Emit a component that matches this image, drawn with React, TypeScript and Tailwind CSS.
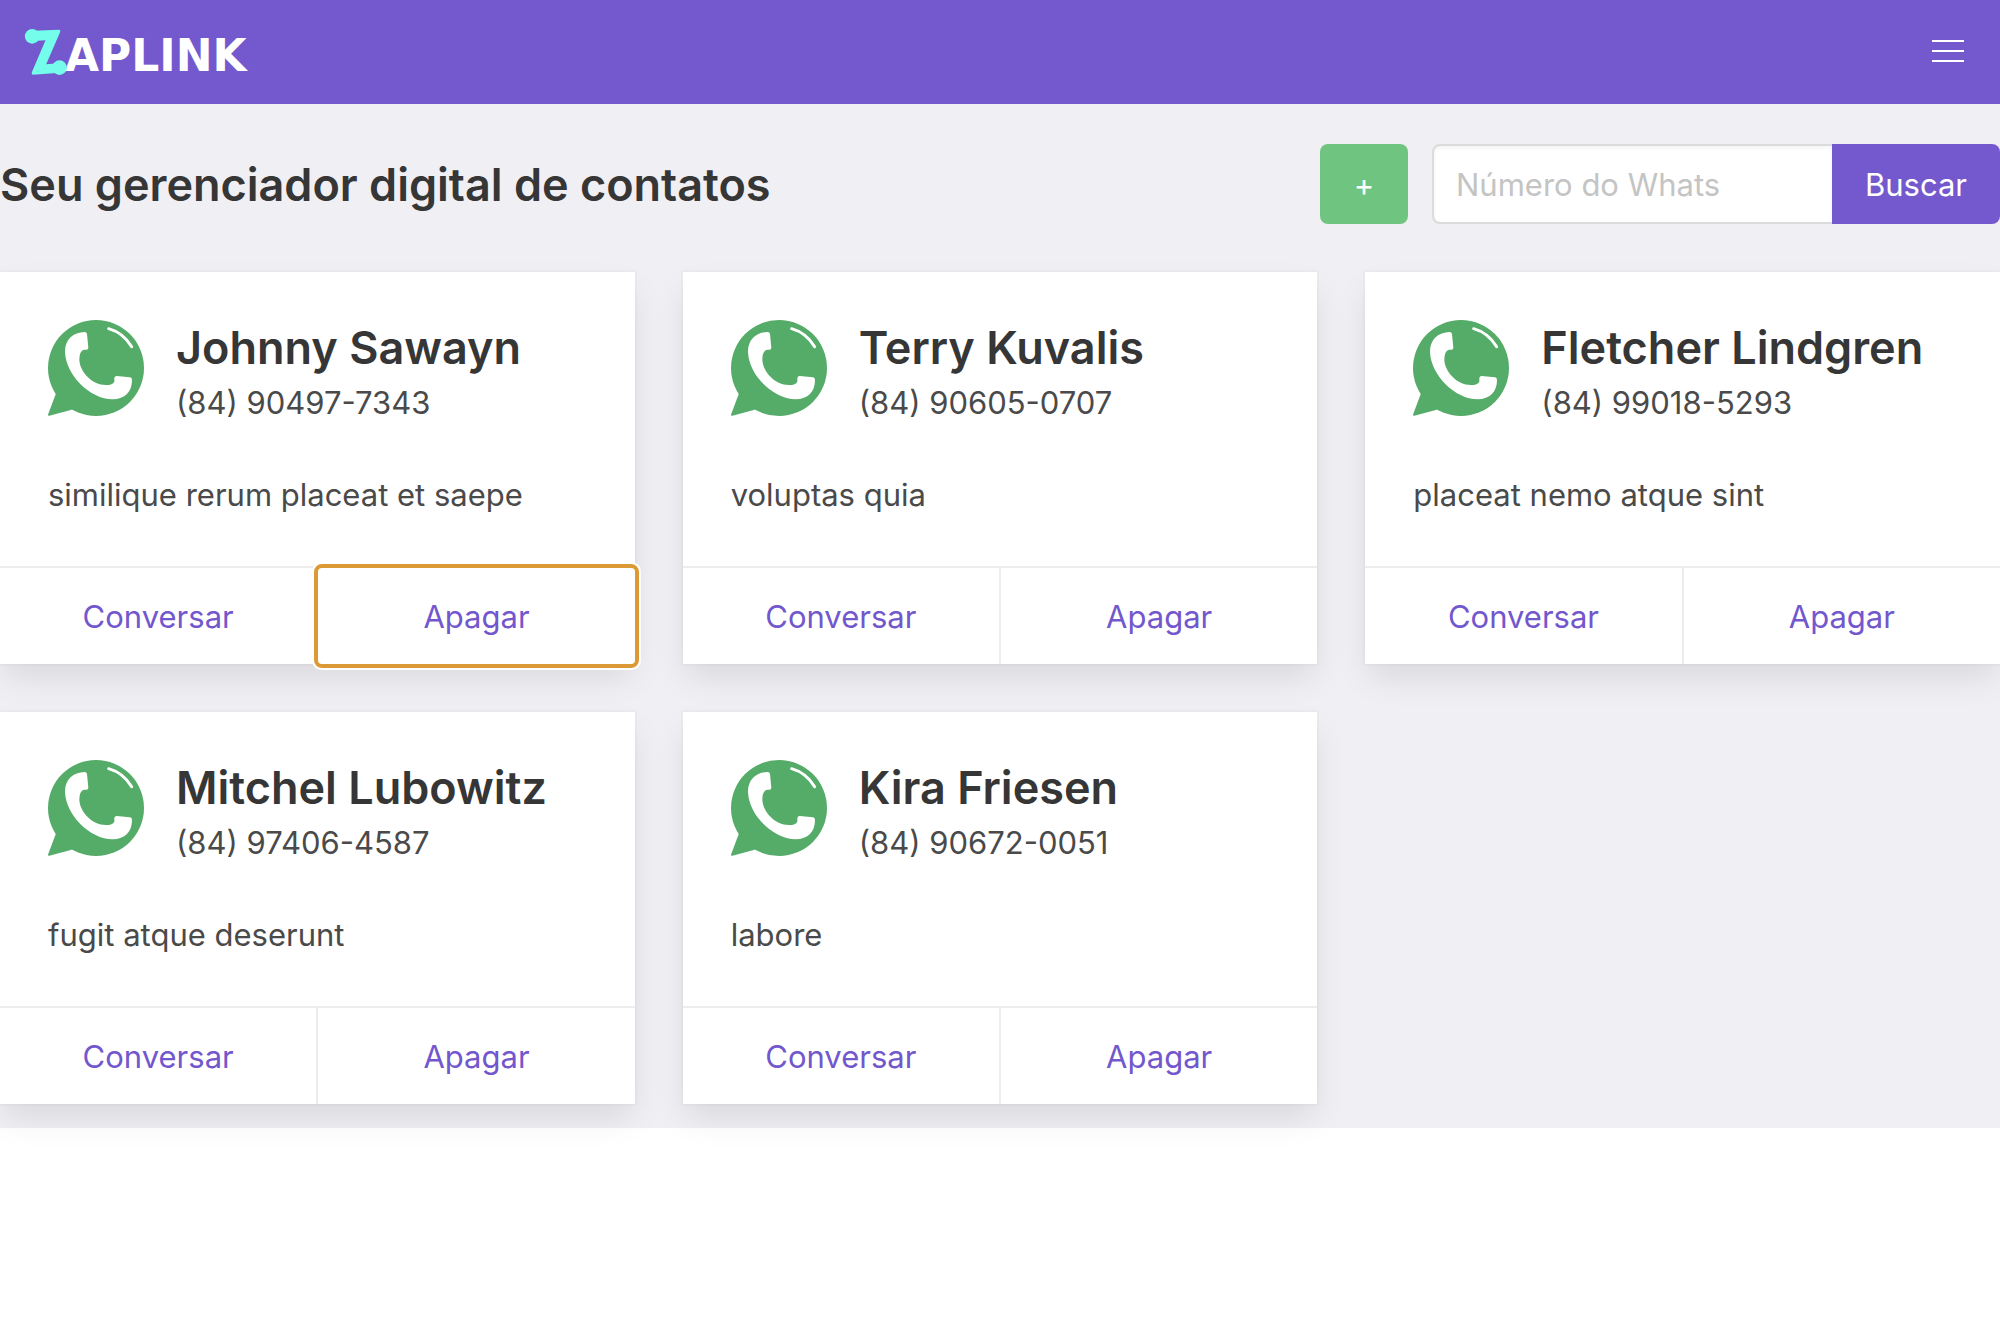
type Contact = {
  name: string;
  phone: string;
  note: string;
  focused?: boolean;
};

const contacts: Contact[] = [
  { name: "Johnny Sawayn", phone: "(84) 90497-7343", note: "similique rerum placeat et saepe", focused: true },
  { name: "Terry Kuvalis", phone: "(84) 90605-0707", note: "voluptas quia" },
  { name: "Fletcher Lindgren", phone: "(84) 99018-5293", note: "placeat nemo atque sint" },
  { name: "Mitchel Lubowitz", phone: "(84) 97406-4587", note: "fugit atque deserunt" },
  { name: "Kira Friesen", phone: "(84) 90672-0051", note: "labore" },
];

function Logo() {
  return (
    <a href="#" aria-label="Zaplink" className="flex items-center pl-6">
      <svg viewBox="72 84 128 144" className="relative h-12 w-[43px]" aria-hidden="true">
        <g fill="#74fdea">
          <circle cx="96" cy="109" r="22" />
          <circle cx="178" cy="203" r="22" />
          <path d="M100 92 L177 89 Q182 90 180 96 L138 193 L178 190 L180 218 L98 224 Q93 223 95 217 L136 121 L100 123 Z" />
        </g>
      </svg>
      <span className="-ml-0.5 pt-2 font-['DejaVu_Sans',sans-serif] text-[44px] leading-none font-bold text-white">
        APLINK
      </span>
    </a>
  );
}

function WhatsIcon() {
  return (
    <svg viewBox="54 60 288 288" className="size-24 shrink-0" aria-hidden="true">
      <g fill="#55ab68">
        <circle cx="198" cy="204" r="144" />
        <path d="M77 283 L54 344 Q54 348 58 347 L125 329 L150 250 Z" />
      </g>
      <path
        fill="#fff"
        d="M164 96 Q170 96 171 102 L175 143 Q175 149 169 149 L162 149 Q148 152 148 180 C150 215 185 255 228 255 Q248 255 253 245 L253 234 Q254 228 260 228 L300 232 Q306 233 306 240 C306 275 285 297 248 298 C180 297 107 225 105 155 C105 118 130 97 164 96 Z"
      />
      <path d="M236 86 Q279 98 305 140" fill="none" stroke="#fff" strokeWidth="9" strokeLinecap="round" />
    </svg>
  );
}

function ContactCard({ name, phone, note, focused }: Contact) {
  return (
    <article className="bg-white shadow-[0_16px_32px_-4px_rgba(10,10,10,0.1),0_0_0_2px_rgba(10,10,10,0.02)]">
      <div className="px-12 pt-12 pb-[46px]">
        <div className="mb-10 flex gap-8">
          <WhatsIcon />
          <div className="min-w-0">
            <h2 className="text-[45px] leading-14 font-semibold text-[#363636]">{name}</h2>
            <p className="text-[31px] leading-[54px]">{phone}</p>
          </div>
        </div>
        <p className="text-[31px] leading-[50px]">{note}</p>
      </div>
      <footer className="flex border-t-2 border-[#ededed] text-[31px] leading-12 text-[#7257cd]">
        <button type="button" className="flex-1 border-r-2 border-[#ededed] pt-[25px] pb-[23px]">
          Conversar
        </button>
        <button
          type="button"
          className={
            focused
              ? "flex-1 rounded-sm bg-white pt-[25px] pb-[23px] shadow-[0_0_0_6px_#fff] outline-4 outline-[#db9a36]"
              : "flex-1 pt-[25px] pb-[23px]"
          }
        >
          Apagar
        </button>
      </footer>
    </article>
  );
}

export default function App() {
  return (
    <div className="min-h-screen bg-white font-[Inter,sans-serif] text-[#4a4a4a]">
      <nav className="flex h-26 items-stretch justify-between bg-[#7458cd]">
        <Logo />
        <button type="button" aria-label="Menu" className="flex w-26 flex-col items-center gap-2 pt-10">
          <span className="h-0.5 w-8 bg-white" />
          <span className="h-0.5 w-8 bg-white" />
          <span className="h-0.5 w-8 bg-white" />
        </button>
      </nav>
      <main className="bg-[#f0eff4] pt-10 pb-6">
        <header className="mb-12 flex items-center justify-between">
          <h1 className="pt-0.5 text-[45px] leading-14 font-semibold text-[#363636]">
            Seu gerenciador digital de contatos
          </h1>
          <div className="flex h-20 gap-6 text-[31px]">
            <button type="button" aria-label="Adicionar contato" className="w-22 rounded-lg bg-[#6fc47f] pt-0.5 text-white">
              +
            </button>
            <form className="flex" onSubmit={(e) => e.preventDefault()}>
              <input
                type="text"
                aria-label="Número do Whats"
                placeholder="Número do Whats"
                className="w-100 rounded-l-lg border-2 border-r-0 border-[#dbdbdb] bg-white px-[22px] pt-0.5 shadow-[inset_0_2px_4px_rgba(10,10,10,0.05)] placeholder:text-[#c4c4c4]"
              />
              <button type="submit" className="w-42 rounded-r-lg bg-[#7458cd] pt-0.5 text-white">
                Buscar
              </button>
            </form>
          </div>
        </header>
        <section className="grid grid-cols-3 gap-12">
          {contacts.map((c) => (
            <ContactCard key={c.phone} {...c} />
          ))}
        </section>
      </main>
    </div>
  );
}
